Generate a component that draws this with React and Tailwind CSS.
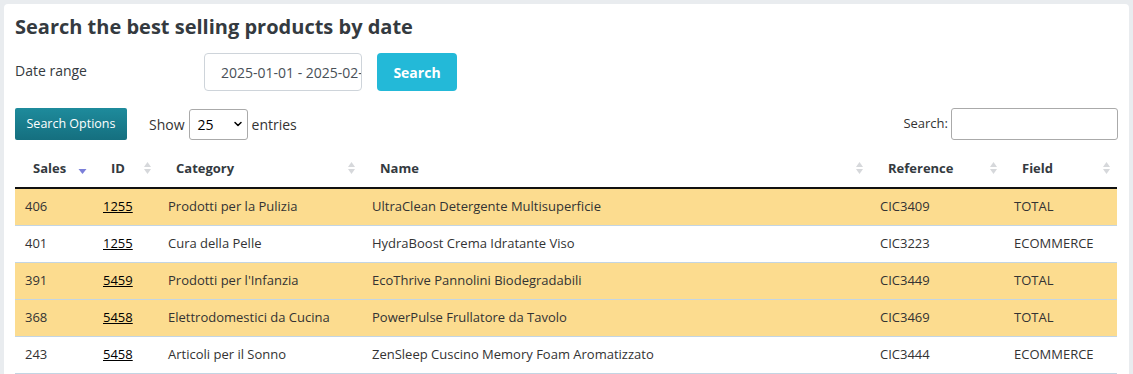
import { ChevronDown } from 'lucide-react';

const rows = [
  { sales: 406, id: '1255', category: 'Prodotti per la Pulizia', name: 'UltraClean Detergente Multisuperficie', ref: 'CIC3409', field: 'TOTAL', hl: true },
  { sales: 401, id: '1255', category: 'Cura della Pelle', name: 'HydraBoost Crema Idratante Viso', ref: 'CIC3223', field: 'ECOMMERCE', hl: false },
  { sales: 391, id: '5459', category: "Prodotti per l'Infanzia", name: 'EcoThrive Pannolini Biodegradabili', ref: 'CIC3449', field: 'TOTAL', hl: true },
  { sales: 368, id: '5458', category: 'Elettrodomestici da Cucina', name: 'PowerPulse Frullatore da Tavolo', ref: 'CIC3469', field: 'TOTAL', hl: true },
  { sales: 243, id: '5458', category: 'Articoli per il Sonno', name: 'ZenSleep Cuscino Memory Foam Aromatizzato', ref: 'CIC3444', field: 'ECOMMERCE', hl: false },
];

const columns = [
  { label: 'Sales', width: 'w-[78px]', active: true },
  { label: 'ID', width: 'w-[65px]' },
  { label: 'Category', width: 'w-[204px]' },
  { label: 'Name', width: 'w-[508px]' },
  { label: 'Reference', width: 'w-[134px]' },
  { label: 'Field', width: 'w-[113px]' },
];

const SortIcon = ({ active }) =>
  active ? (
    <svg width="9" height="14" viewBox="0 0 9 14" className="absolute right-[6px] top-1/2 -translate-y-1/2">
      <path d="M0.5 8 L8.5 8 L4.5 13 Z" fill="#7b7fd9" />
    </svg>
  ) : (
    <svg width="9" height="14" viewBox="0 0 9 14" className="absolute right-[6px] top-1/2 -translate-y-1/2">
      <path d="M1 6 L8 6 L4.5 1 Z" fill="#d6d8db" />
      <path d="M1 8 L8 8 L4.5 13 Z" fill="#d6d8db" />
    </svg>
  );

export default function App() {
  return (
    <div className="h-[374px] overflow-hidden bg-[#e9ecef] px-[4px] pt-[4px] font-['Open_Sans',sans-serif] text-[#333]">
      <div className="h-[370px] overflow-hidden rounded-t-[4px] bg-white px-[11px] pt-[11px]">
        <h4 className="text-[20px] font-bold leading-[24px] text-[#343a40]">
          Search the best selling products by date
        </h4>

        <div className="mt-[14px] flex items-start">
          <label className="w-[189px] pt-[8px] text-[14px] leading-[20px] text-[#343a40]">Date range</label>
          <div className="flex h-[38px] w-[158px] items-center overflow-hidden rounded-[4px] border border-[#ced4da] px-[16px] text-[14px] whitespace-nowrap text-[#495057]">
            2025-01-01 - 2025-02-28
          </div>
          <button className="ml-[15px] h-[38px] w-[80px] rounded-[4px] bg-[#23b9d8] text-[14px] font-bold text-white">
            Search
          </button>
        </div>

        <div className="mt-[17px] flex items-center">
          <button className="h-[32px] w-[112px] rounded-[2px] bg-gradient-to-b from-[#1e8b9c] to-[#156f7f] text-[12.5px] text-white">
            Search Options
          </button>
          <span className="ml-[22px] text-[14px]">Show</span>
          <div className="ml-[4px] flex h-[31px] w-[59px] items-center justify-between rounded-[3px] border border-[#aaa] pr-[3px] pl-[8px] text-[14px] text-black">
            25
            <ChevronDown size={12} strokeWidth={3} />
          </div>
          <span className="ml-[4px] text-[14px]">entries</span>
          <span className="ml-auto mr-[3px] text-[13px]">Search:</span>
          <div className="h-[32px] w-[167px] rounded-[3px] border border-[#aaa]" />
        </div>

        <table className="mt-[9px] w-[1102px] table-fixed border-collapse text-[13px]">
          <colgroup>
            {columns.map((c) => (
              <col key={c.label} className={c.width} />
            ))}
          </colgroup>
          <thead>
            <tr className="border-b-2 border-[#111]">
              {columns.map((c) => (
                <th key={c.label} className="relative h-[39px] pl-[18px] pt-[2px] text-left text-[13px] font-bold text-[#343a40]">
                  {c.label}
                  <SortIcon active={c.active} />
                </th>
              ))}
            </tr>
          </thead>
          <tbody>
            {rows.map((r, i) => (
              <tr key={i} className={`border-b border-[#c3d5e3] ${r.hl ? 'bg-[#fcdc8f]' : 'bg-white'}`}>
                <td className="h-[37px] px-[10px]">{r.sales}</td>
                <td className="px-[10px]">
                  <span className="text-black underline">{r.id}</span>
                </td>
                <td className="px-[10px]">{r.category}</td>
                <td className="px-[10px]">{r.name}</td>
                <td className="px-[10px]">{r.ref}</td>
                <td className="px-[10px]">{r.field}</td>
              </tr>
            ))}
          </tbody>
        </table>
      </div>
    </div>
  );
}
